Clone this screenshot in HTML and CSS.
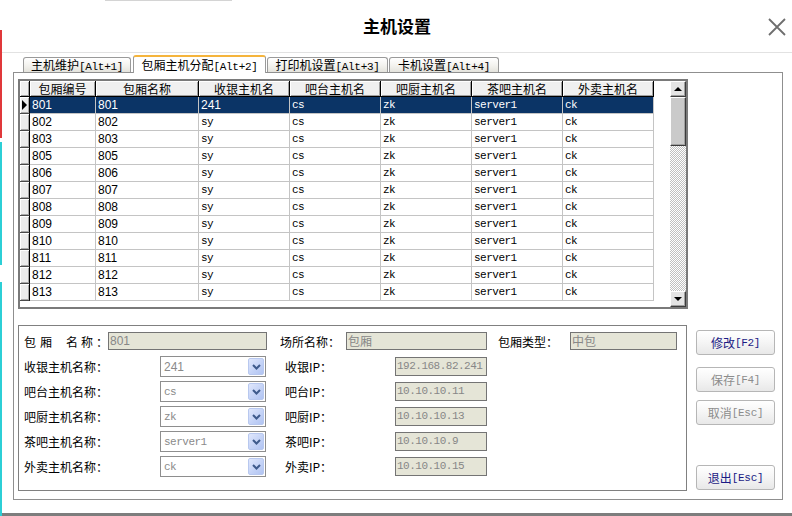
FILE: index.html
```html
<!DOCTYPE html>
<html lang="zh-CN">
<head>
<meta charset="utf-8">
<title>主机设置</title>
<link rel="stylesheet" href="styles.css">
</head>
<body>
<div class="dialog">
  <header class="titlebar">
    <h1 class="title">主机设置</h1>
    <button class="close" type="button" aria-label="关闭">
      <svg width="18" height="18" viewBox="0 0 18 18"><path d="M1 1 L17 17 M17 1 L1 17" stroke="#6e6e6e" stroke-width="1.8" fill="none"/></svg>
    </button>
  </header>

  <div class="tabs">
    <div class="tab t1">主机维护<span class="k">[Alt+1]</span></div>
    <div class="tab t2 active">包厢主机分配<span class="k">[Alt+2]</span></div>
    <div class="tab t3">打印机设置<span class="k">[Alt+3]</span></div>
    <div class="tab t4">卡机设置<span class="k">[Alt+4]</span></div>
  </div>

  <div class="panel">
    <div class="grid">
      <div class="gridbody">
        <div class="row head">
          <div class="hc"></div><div class="hc">包厢编号</div><div class="hc">包厢名称</div><div class="hc">收银主机名</div><div class="hc">吧台主机名</div><div class="hc">吧厨主机名</div><div class="hc">茶吧主机名</div><div class="hc">外卖主机名</div>
        </div>
        <div class="row sel"><div class="ind cur"></div><div class="c n">801</div><div class="c n">801</div><div class="c n">241</div><div class="c m">cs</div><div class="c m">zk</div><div class="c m">server1</div><div class="c m">ck</div></div>
        <div class="row"><div class="ind"></div><div class="c n">802</div><div class="c n">802</div><div class="c m">sy</div><div class="c m">cs</div><div class="c m">zk</div><div class="c m">server1</div><div class="c m">ck</div></div>
        <div class="row"><div class="ind"></div><div class="c n">803</div><div class="c n">803</div><div class="c m">sy</div><div class="c m">cs</div><div class="c m">zk</div><div class="c m">server1</div><div class="c m">ck</div></div>
        <div class="row"><div class="ind"></div><div class="c n">805</div><div class="c n">805</div><div class="c m">sy</div><div class="c m">cs</div><div class="c m">zk</div><div class="c m">server1</div><div class="c m">ck</div></div>
        <div class="row"><div class="ind"></div><div class="c n">806</div><div class="c n">806</div><div class="c m">sy</div><div class="c m">cs</div><div class="c m">zk</div><div class="c m">server1</div><div class="c m">ck</div></div>
        <div class="row"><div class="ind"></div><div class="c n">807</div><div class="c n">807</div><div class="c m">sy</div><div class="c m">cs</div><div class="c m">zk</div><div class="c m">server1</div><div class="c m">ck</div></div>
        <div class="row"><div class="ind"></div><div class="c n">808</div><div class="c n">808</div><div class="c m">sy</div><div class="c m">cs</div><div class="c m">zk</div><div class="c m">server1</div><div class="c m">ck</div></div>
        <div class="row"><div class="ind"></div><div class="c n">809</div><div class="c n">809</div><div class="c m">sy</div><div class="c m">cs</div><div class="c m">zk</div><div class="c m">server1</div><div class="c m">ck</div></div>
        <div class="row"><div class="ind"></div><div class="c n">810</div><div class="c n">810</div><div class="c m">sy</div><div class="c m">cs</div><div class="c m">zk</div><div class="c m">server1</div><div class="c m">ck</div></div>
        <div class="row"><div class="ind"></div><div class="c n">811</div><div class="c n">811</div><div class="c m">sy</div><div class="c m">cs</div><div class="c m">zk</div><div class="c m">server1</div><div class="c m">ck</div></div>
        <div class="row"><div class="ind"></div><div class="c n">812</div><div class="c n">812</div><div class="c m">sy</div><div class="c m">cs</div><div class="c m">zk</div><div class="c m">server1</div><div class="c m">ck</div></div>
        <div class="row"><div class="ind"></div><div class="c n">813</div><div class="c n">813</div><div class="c m">sy</div><div class="c m">cs</div><div class="c m">zk</div><div class="c m">server1</div><div class="c m">ck</div></div>
      </div>
      <div class="vscroll">
        <div class="sbtn"><span class="tri-up"></span></div>
        <div class="thumb"></div>
        <div class="track"></div>
        <div class="sbtn"><span class="tri-down"></span></div>
      </div>
    </div>

    <div class="lower">
      <div class="group">
        <div class="frow r0">
          <div class="lbl w84"><span class="sp4">包厢</span><span class="sp3 gap">名称</span>：</div>
          <div class="fld w159 n">801</div>
          <div class="lbl w66 ml13">场所名称：</div>
          <div class="fld w141">包厢</div>
          <div class="lbl w72 ml11">包厢类型：</div>
          <div class="fld w107">中包</div>
        </div>
        <div class="frow rs first">
          <div class="lbl w136">收银主机名称：</div>
          <div class="combo"><span class="cv n">241</span><span class="dd"><svg width="9" height="6" viewBox="0 0 9 6"><path d="M1 1 L4.5 4.5 L8 1" stroke="#3e5a8c" stroke-width="2" fill="none"/></svg></span></div>
          <div class="lbl w110 ml19">收银IP：</div>
          <div class="fld ip m">192.168.82.241</div>
        </div>
        <div class="frow rs">
          <div class="lbl w136">吧台主机名称：</div>
          <div class="combo"><span class="cv m">cs</span><span class="dd"><svg width="9" height="6" viewBox="0 0 9 6"><path d="M1 1 L4.5 4.5 L8 1" stroke="#3e5a8c" stroke-width="2" fill="none"/></svg></span></div>
          <div class="lbl w110 ml19">吧台IP：</div>
          <div class="fld ip m">10.10.10.11</div>
        </div>
        <div class="frow rs">
          <div class="lbl w136">吧厨主机名称：</div>
          <div class="combo"><span class="cv m">zk</span><span class="dd"><svg width="9" height="6" viewBox="0 0 9 6"><path d="M1 1 L4.5 4.5 L8 1" stroke="#3e5a8c" stroke-width="2" fill="none"/></svg></span></div>
          <div class="lbl w110 ml19">吧厨IP：</div>
          <div class="fld ip m">10.10.10.13</div>
        </div>
        <div class="frow rs">
          <div class="lbl w136">茶吧主机名称：</div>
          <div class="combo"><span class="cv m">server1</span><span class="dd"><svg width="9" height="6" viewBox="0 0 9 6"><path d="M1 1 L4.5 4.5 L8 1" stroke="#3e5a8c" stroke-width="2" fill="none"/></svg></span></div>
          <div class="lbl w110 ml19">茶吧IP：</div>
          <div class="fld ip m">10.10.10.9</div>
        </div>
        <div class="frow rs">
          <div class="lbl w136">外卖主机名称：</div>
          <div class="combo"><span class="cv m">ck</span><span class="dd"><svg width="9" height="6" viewBox="0 0 9 6"><path d="M1 1 L4.5 4.5 L8 1" stroke="#3e5a8c" stroke-width="2" fill="none"/></svg></span></div>
          <div class="lbl w110 ml19">外卖IP：</div>
          <div class="fld ip m">10.10.10.15</div>
        </div>
      </div>
      <div class="btns">
        <button class="btn b1" type="button">修改<span class="k">[F2]</span></button>
        <button class="btn b2 dis" type="button">保存<span class="k">[F4]</span></button>
        <button class="btn b3 dis" type="button">取消<span class="k">[Esc]</span></button>
        <button class="btn b4" type="button">退出<span class="k">[Esc]</span></button>
      </div>
    </div>
  </div>
</div>
</body>
</html>
```

FILE: styles.css
```css
* { box-sizing: border-box; }
html, body { margin: 0; padding: 0; }
body {
  width: 792px;
  height: 516px;
  overflow: hidden;
  font-family: "Noto Sans CJK SC", "Noto Sans", sans-serif;
  font-size: 12px;
  color: #000;
  background:
    linear-gradient(to bottom, #fff 0, #fff 30px, #e0383a 30px, #e0383a 138px, #fff 138px, #fff 142px, #2ccfd6 142px, #2ccfd6 265px, #fff 265px, #fff 282px, #2ccfd6 282px) 0 0 / 2px 100% no-repeat,
    #fff;
}

.dialog {
  margin-left: 2px;
  width: 790px;
  height: 516px;
  background: #fff;
  border-bottom: 3px solid #7d7d7d;
}

/* title bar */
.titlebar {
  height: 53px;
  border-bottom: 1px solid #e2e2e2;
  display: grid;
  grid-template-columns: 1fr auto 1fr;
  align-items: center;
  background: linear-gradient(#d4d4d4, #d4d4d4) 103px 0 / 127px 1px no-repeat, #fff;
}
.title {
  grid-column: 2;
  margin: 0;
  font-size: 17px;
  font-weight: bold;
  line-height: 20px;
}
.close {
  grid-column: 3;
  justify-self: end;
  margin: 2px 6px 0 0;
  width: 18px;
  height: 18px;
  padding: 0;
  border: 0;
  background: none;
  display: block;
}
.close svg { display: block; }

/* tabs */
.tabs {
  height: 19px;
  display: flex;
  align-items: flex-end;
  padding-left: 21px;
}
.tab {
  height: 15px;
  border: 1px solid #9a9a9a;
  border-bottom: 0;
  border-radius: 3px 3px 0 0;
  background: linear-gradient(#ffffff, #f3f2ee 55%, #e4e3dc);
  font-size: 12px;
  line-height: 13px;
  text-align: center;
  white-space: nowrap;
  margin-left: 1px;
}
.t1 { width: 108px; margin-left: 0; }
.t2 { width: 133px; margin-left: 2px; }
.t3 { width: 121px; }
.t4 { width: 110px; }
.tab.active {
  height: 18px;
  margin-bottom: -1px;
  background: #fff;
  border-top: 2px solid #f5b43c;
  line-height: 15px;
  position: relative;
  z-index: 1;
}
.k {
  font-family: "Liberation Mono", monospace;
  font-size: 11px;
  letter-spacing: -0.3px;
}

/* panel */
.panel {
  margin-left: 11px;
  width: 770px;
  height: 428px;
  border: 1px solid #8f8f8f;
  padding: 6px 7px 0 4px;
}

/* data grid */
.grid {
  width: 670px;
  height: 230px;
  border: 2px solid #7a7a7a;
  display: flex;
  background: #fff;
}
.gridbody { flex: 1; }
.row {
  display: grid;
  grid-template-columns: 10px 66px 103px 91px 91px 91px 91px 91px;
  height: 17px;
}
.row.head { height: 16px; }
.hc {
  background: #f0f0f0;
  border-right: 1px solid #000;
  border-bottom: 1px solid #000;
  box-shadow: inset 1px 1px 0 #fff, inset -1px -1px 0 #a0a0a0;
  text-align: center;
  line-height: 15px;
  white-space: nowrap;
}
.ind {
  background: #ececec;
  border-right: 1px solid #000;
  border-bottom: 1px solid #4a4a4a;
  box-shadow: inset 1px 1px 0 #fff, inset -1px -1px 0 #a8a8a8;
}
.ind.cur::after {
  content: "";
  display: block;
  width: 0;
  height: 0;
  margin: 3px 0 0 2px;
  border-left: 5px solid #000;
  border-top: 5px solid transparent;
  border-bottom: 5px solid transparent;
}
.c {
  border-right: 1px solid #c4c4c4;
  border-bottom: 1px solid #c4c4c4;
  padding-left: 2px;
  line-height: 16px;
  white-space: nowrap;
  overflow: hidden;
}
.sel .c { background: #0b3466; color: #fff; }
.n { font-family: "Liberation Sans", Arial, sans-serif; font-size: 12px; }
.m { font-family: "Liberation Mono", monospace; font-size: 11px; letter-spacing: -0.5px; }

/* vertical scrollbar */
.vscroll {
  width: 16px;
  display: flex;
  flex-direction: column;
}
.sbtn, .thumb {
  background: #e4e4e4;
  border: 1px solid;
  border-color: #fff #3c3c3c #3c3c3c #fff;
  box-shadow: inset -1px -1px 0 #a0a0a0;
}
.sbtn {
  height: 16px;
  display: flex;
  align-items: center;
  justify-content: center;
}
.thumb { height: 49px; background: #cacaca; }
.track {
  flex: 1;
  background: repeating-conic-gradient(#c0c0c0 0 25%, #fff 0 50%) 0 0 / 2px 2px;
}
.tri-up, .tri-down {
  width: 0;
  height: 0;
  border-left: 4px solid transparent;
  border-right: 4px solid transparent;
}
.tri-up { border-bottom: 4px solid #000; }
.tri-down { border-top: 4px solid #000; }

/* lower area */
.lower {
  display: flex;
  gap: 9px;
  margin-top: 16px;
}
.group {
  width: 669px;
  height: 166px;
  border: 1px solid #808080;
  padding: 6px 0 0 5px;
}
.frow { display: flex; align-items: center; }
.r0 { height: 18px; }
.rs { height: 21px; margin-top: 4px; }
.rs.first { margin-top: 6px; }

.lbl { flex: none; white-space: nowrap; overflow: hidden; }
.sp4 { letter-spacing: 4px; }
.sp3 { letter-spacing: 3px; }
.gap { margin-left: 10px; }
.w84 { width: 84px; }
.w66 { width: 66px; }
.w72 { width: 72px; }
.w136 { width: 136px; }
.w110 { width: 110px; }
.ml13 { margin-left: 13px; }
.ml11 { margin-left: 11px; }
.ml19 { margin-left: 19px; }

.fld {
  flex: none;
  height: 18px;
  border: 1px solid #747474;
  background: #e5e5d7;
  color: #878787;
  padding-left: 1px;
  line-height: 16px;
  white-space: nowrap;
}
.w159 { width: 159px; }
.w141 { width: 141px; }
.w107 { width: 107px; }
.fld.ip { width: 92px; height: 19px; line-height: 17px; }

.combo {
  flex: none;
  width: 106px;
  height: 21px;
  border: 1px solid #8e8e8e;
  background: #fff;
  display: flex;
  align-items: center;
  padding: 1px;
}
.cv {
  flex: 1;
  color: #8a8a8a;
  padding-left: 2px;
  white-space: nowrap;
}
.dd {
  width: 16px;
  height: 17px;
  border: 1px solid #b8c8ef;
  border-radius: 2px;
  background: linear-gradient(135deg, #e0e7fc, #c2d1f6 60%, #b1c4f2);
  display: flex;
  align-items: center;
  justify-content: center;
}
.dd svg { display: block; }

/* buttons */
.btns {
  width: 79px;
  display: flex;
  flex-direction: column;
}
.btn {
  height: 25px;
  width: 79px;
  padding: 0;
  border: 1px solid #b6b6b6;
  border-radius: 3px;
  background: linear-gradient(#ffffff, #f6f6f6 45%, #e8e8e8);
  color: #1b1b85;
  font-family: "Noto Sans CJK SC", sans-serif;
  font-size: 12px;
  display: flex;
  align-items: center;
  justify-content: center;
  white-space: nowrap;
}
.btn.dis { color: #8c8c8c; }
.b1 { margin-top: 5px; }
.b2 { margin-top: 12px; }
.b3 { margin-top: 8px; }
.b4 { margin-top: auto; margin-bottom: 1px; }
```
